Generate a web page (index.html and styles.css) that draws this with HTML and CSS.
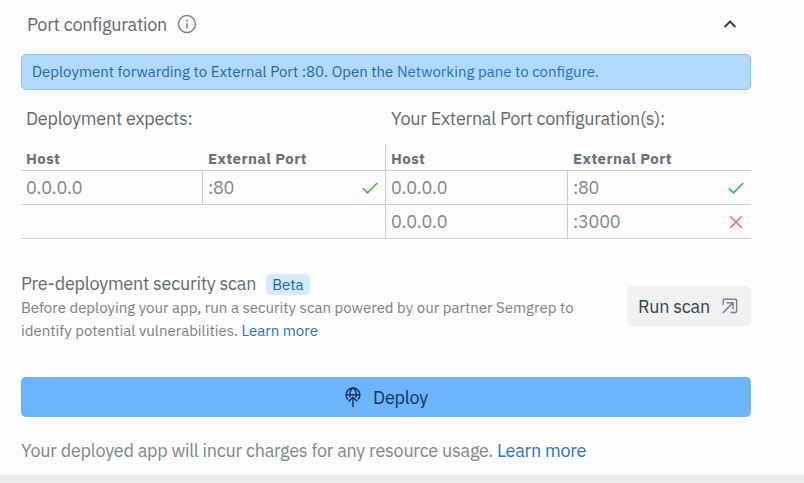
FILE: index.html
```html
<!DOCTYPE html>
<html lang="en">
<head>
<meta charset="utf-8">
<title>Port configuration</title>
<link rel="stylesheet" href="styles.css">
</head>
<body>
<main class="pane">
  <header class="title">
    <span class="title-text">Port configuration</span>
    <svg class="info" width="20" height="20" viewBox="0 0 20 20" fill="none"><circle cx="10" cy="10" r="8.5" stroke="#7c8086" stroke-width="1.4"/><path d="M10 9.2v5M10 5.7v1.7" stroke="#7c8086" stroke-width="1.6"/></svg>
    <svg class="chevron" width="14" height="10" viewBox="0 0 14 10" fill="none"><path d="M1.6 8 7 2.6 12.4 8" stroke="#303438" stroke-width="1.8"/></svg>
  </header>
  <div class="banner">Deployment forwarding to External Port :80. Open the <a>Networking pane to configure.</a></div>

  <div class="captions"><span>Deployment expects:</span><span>Your External Port configuration(s):</span></div>
  <table class="ports">
    <colgroup><col class="c1"><col class="c2"><col class="c3"><col class="c4"></colgroup>
    <thead>
      <tr><th>Host</th><th class="inset">External Port</th><th class="divided">Host</th><th class="inset">External Port</th></tr>
    </thead>
    <tbody>
      <tr>
        <td>0.0.0.0</td>
        <td class="divided"><div class="port">:80<svg width="18" height="14" viewBox="0 0 18 14" fill="none"><path d="M1.8 7.2 6.5 11.8 16.2 2" stroke="#35b850" stroke-width="1.6"/></svg></div></td>
        <td class="divided">0.0.0.0</td>
        <td class="divided"><div class="port">:80<svg width="18" height="14" viewBox="0 0 18 14" fill="none"><path d="M1.8 7.2 6.5 11.8 16.2 2" stroke="#35b850" stroke-width="1.6"/></svg></div></td>
      </tr>
      <tr>
        <td colspan="2"></td>
        <td class="divided">0.0.0.0</td>
        <td class="divided"><div class="port">:3000<svg width="18" height="14" viewBox="0 0 18 14" fill="none"><path d="M3.3 1.3 14.7 12.7M14.7 1.3 3.3 12.7" stroke="#f96464" stroke-width="1.5"/></svg></div></td>
      </tr>
    </tbody>
  </table>

  <section class="scan">
    <div class="scan-copy">
      <div class="scan-title"><span>Pre-deployment security scan</span><span class="beta">Beta</span></div>
      <p>Before deploying your app, run a security scan powered by our partner Semgrep to<br>identify potential vulnerabilities. <a>Learn more</a></p>
    </div>
    <button class="run"><span>Run scan</span><svg width="16" height="16" viewBox="0 0 16 16" fill="none" stroke="#7c7f84" stroke-width="1.4"><path d="M1.2 7V2.5Q1.2 1.2 2.5 1.2H13.2Q14.6 1.2 14.6 2.5V13.2Q14.6 14.5 13.2 14.5H8.5M.8 15 10.8 5M4.5 4.8H11V11"/></svg></button>
  </section>

  <button class="deploy"><svg width="16" height="20" viewBox="0 0 16 20" fill="none" stroke="#123350" stroke-width="1.4"><path d="M3 12.6A6.9 6.9 0 1 1 13 12.6M1 7.7H15M5.1 10.5C4.2 6 5.6 2.5 8 .9M10.9 10.5C11.8 6 10.4 2.5 8 .9M8 20V10.4M3.6 14.6 8 10.3 12.4 14.6"/></svg><span>Deploy</span></button>
  <p class="charges">Your deployed app will incur charges for any resource usage. <a>Learn more</a></p>
</main>
<div class="bottom-strip"></div>
</body>
</html>
```
FILE: styles.css
```css
* { box-sizing: border-box; }
body {
  margin: 0;
  height: 483px;
  overflow: hidden;
  display: flex;
  flex-direction: column;
  background: #fcfcfc;
  color: #65696f;
  font: 18px/24px "IBM Plex Sans", Roboto, sans-serif;
  letter-spacing: -.24px;
}
p { margin: 0; }
a { color: #2573c5; }
button { border: 0; padding: 0; font: inherit; letter-spacing: inherit; }
svg { display: block; flex: none; }
.pane { width: 751px; height: 475px; padding: 13px 0 0 21px; }
.title { display: flex; align-items: center; height: 24px; padding: 0 14px 0 6px; }
.title-text { width: 150px; }
.title svg { position: relative; top: -1px; }
.chevron { margin-left: auto; }
.banner {
  height: 36px;
  margin-top: 17px;
  padding: 0 10px;
  border: 1px solid #83c0ff;
  border-radius: 5px;
  background: #b2d9ff;
  color: #2465a6;
  font-size: 15px;
  line-height: 33px;
  letter-spacing: 0;
  white-space: nowrap;
}
.banner a { color: #1e70c4; }
.captions { display: grid; grid-template-columns: 365px 365px; margin-top: 17px; padding-left: 5px; height: 24px; }
.ports {
  width: 730px;
  margin-top: 13px;
  table-layout: fixed;
  border-collapse: separate;
  border-spacing: 0;
}
.c1 { width: 181px; }
.c2 { width: 183px; }
.c3 { width: 182px; }
.c4 { width: 184px; }
.ports th, .ports td { padding: 0 6px 0 5px; text-align: left; border-bottom: 1px solid #cfd1d3; }
.ports th { height: 27px; padding-top: 3px; font-size: 15px; line-height: 20px; letter-spacing: .45px; color: #6b6e75; }
.ports td { height: 34px; color: #83868b; }
.ports .divided { border-left: 1px solid #c9cccf; }
.ports .inset { padding-left: 6px; }
.port { display: flex; align-items: center; justify-content: space-between; }
.scan { display: flex; justify-content: space-between; margin-top: 33px; }
.scan-title { display: flex; align-items: center; height: 24px; }
.beta {
  height: 21px;
  margin-left: 10px;
  padding: 0 6px;
  border-radius: 5px;
  background: #d5eaff;
  color: #2166a8;
  font-size: 15px;
  line-height: 21px;
  letter-spacing: 0;
}
.scan p { font-size: 15px; line-height: 23px; letter-spacing: 0; color: #7c7f84; white-space: nowrap; }
.run {
  display: flex;
  align-items: center;
  justify-content: space-between;
  width: 124px;
  height: 40px;
  margin-top: 14px;
  padding: 0 13px 0 11px;
  border-radius: 5px;
  background: #eff1f3;
  color: #3a3e43;
}
.run span, .deploy span { padding-top: 1px; }
.deploy {
  display: flex;
  align-items: center;
  justify-content: center;
  gap: 12px;
  width: 730px;
  height: 40px;
  margin-top: 35px;
  padding-left: 1px;
  border-radius: 5px;
  background: #6bb4ff;
  color: #15324f;
}
.charges { margin-top: 22px; color: #83868b; white-space: nowrap; }
.bottom-strip { flex: 1; background: #eaebed; }
```
